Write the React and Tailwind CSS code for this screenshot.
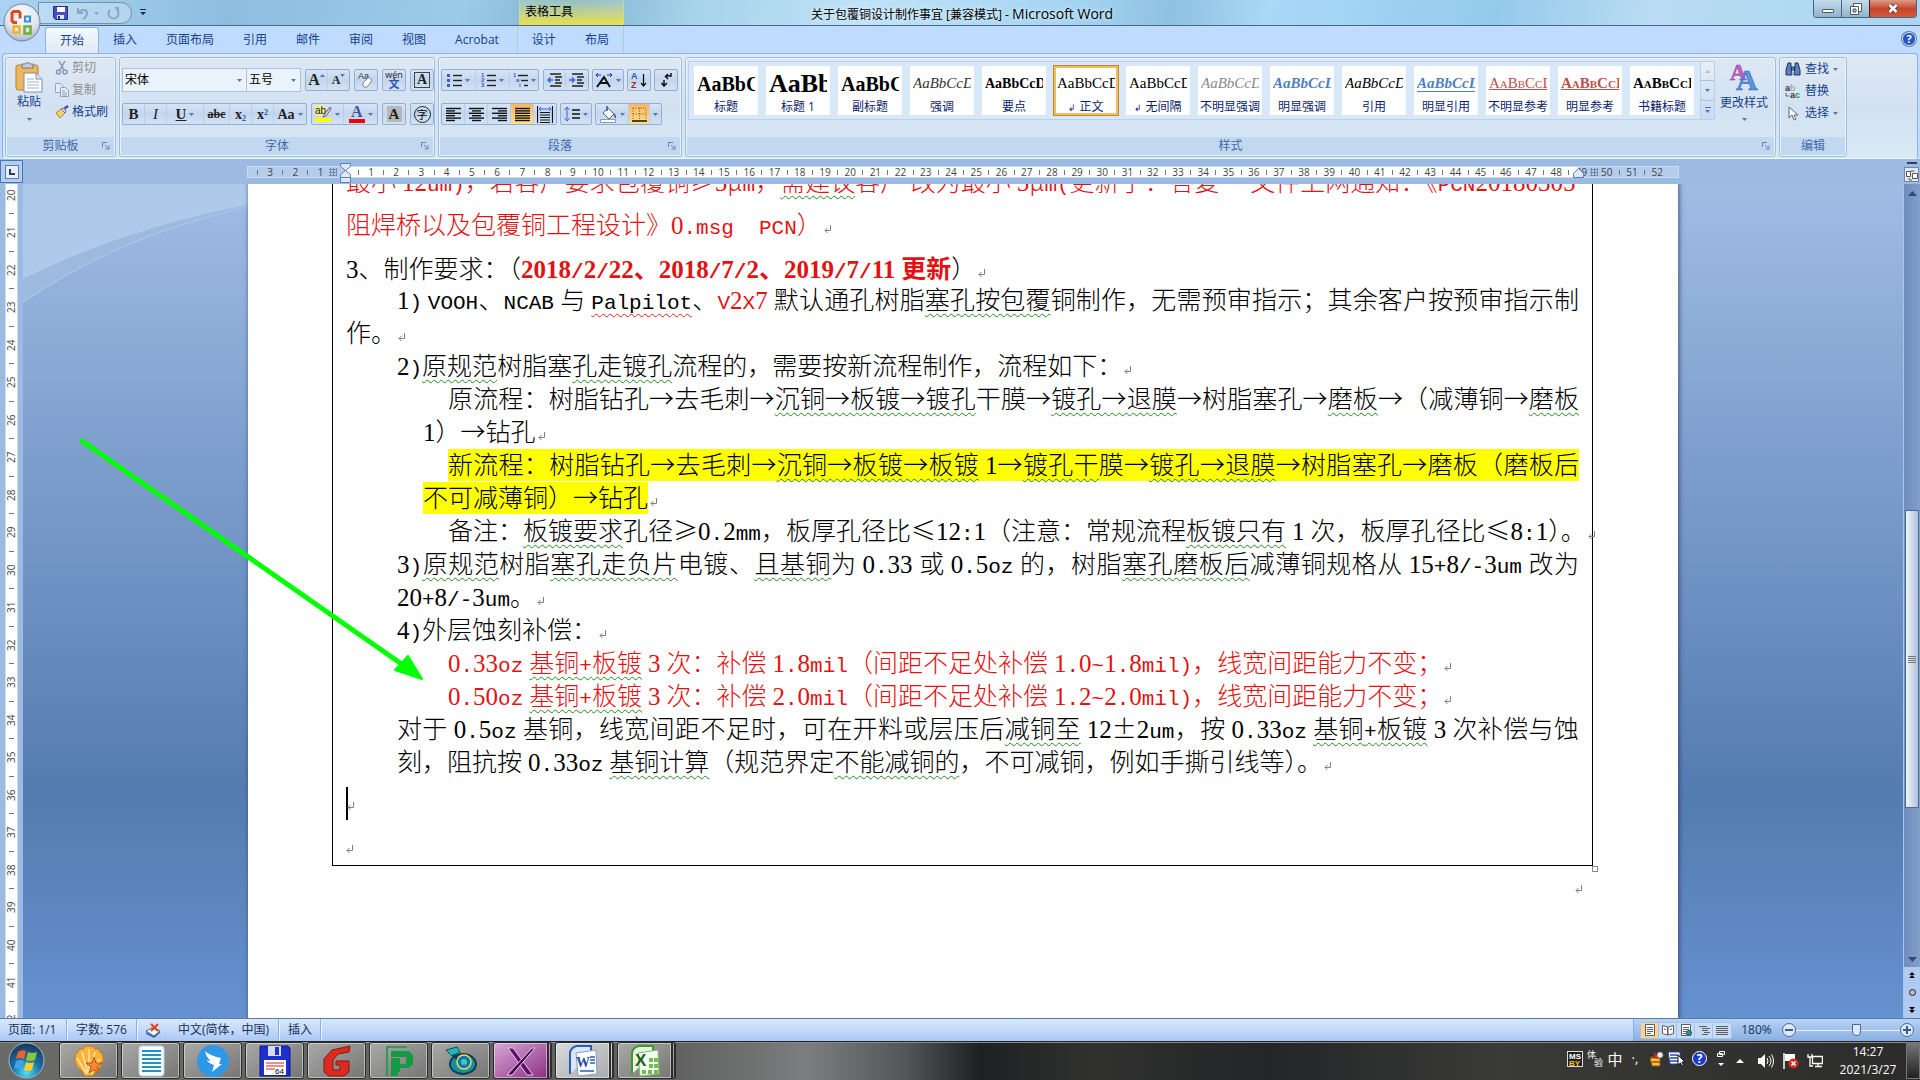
import { useState } from 'react'

const tabs = ['开始', '插入', '页面布局', '引用', '邮件', '审阅', '视图', 'Acrobat']

const styleCards = [
  { name: '标题', text: 'AaBbCcDd', cls: 'text-[20px] font-bold' },
  { name: '标题 1', text: 'AaBbCcDd', cls: 'text-[26px] font-bold' },
  { name: '副标题', text: 'AaBbCcDd', cls: 'text-[20px] font-bold' },
  { name: '强调', text: 'AaBbCcDd', cls: 'text-[15px] italic text-[#333]' },
  { name: '要点', text: 'AaBbCcDd', cls: 'text-[14px] font-bold' },
  { name: '正文', text: 'AaBbCcDd', cls: 'text-[15px]', mark: true, active: true },
  { name: '无间隔', text: 'AaBbCcDd', cls: 'text-[15px]', mark: true },
  { name: '不明显强调', text: 'AaBbCcDd', cls: 'text-[15px] italic text-[#8a8a8a]' },
  { name: '明显强调', text: 'AaBbCcDd', cls: 'text-[15px] italic font-bold text-[#4f81bd]' },
  { name: '引用', text: 'AaBbCcDd', cls: 'text-[15px] italic' },
  { name: '明显引用', text: 'AaBbCcDd', cls: 'text-[15px] italic font-bold text-[#4f81bd] border-b border-[#4f81bd]' },
  { name: '不明显参考', text: 'AaBbCcDd', cls: 'text-[15px] [font-variant:small-caps] underline text-[#c0504d]' },
  { name: '明显参考', text: 'AaBbCcDd', cls: 'text-[15px] [font-variant:small-caps] font-bold underline text-[#c0504d]' },
  { name: '书籍标题', text: 'AaBbCcDd', cls: 'text-[15px] [font-variant:small-caps] font-bold' },
]

// each part is [text, flags]: g = grammar wave, s = spelling wave, r = red, b = bold, y = highlight
const lines = [
  { box: 'h-[43px] leading-[43px] pr-[11px]', full: true, parts: [['最小12um)，若客户要求包覆铜≥5μm，', 'r'], ['需建议', 'rg'], ['客户 改为最小5μm(更新于：答复 \u3000文件上网通知：《PCN20180305', 'r']] },
  { box: 'h-[43px] leading-[43px]', parts: [['阻焊桥以及包覆铜工程设计》0.msg\u3000PCN）', 'r']] },
  { box: 'h-[37px] leading-[44px]', parts: [['3、制作要求：（'], ['2018/2/22、2018/7/2、2019/7/11更新', 'rb'], ['）']] },
  { box: 'h-[33px] pl-[51px]', full: true, parts: [['1) VOOH、NCAB与'], ['Palpilot', 's'], ['、'], ['V2X7', 'r'], ['默认通孔树脂'], ['塞孔按包覆', 'g'], ['铜制作，无需预审指示；其余客户按预审指示制']] },
  { box: 'h-[33px]', parts: [['作。']] },
  { box: 'h-[33px] pl-[51px]', parts: [['2)'], ['原规范', 'g'], ['树脂塞'], ['孔走镀孔', 'g'], ['流程的，需要按新流程制作，流程如下：']] },
  { box: 'h-[33px] pl-[102px]', full: true, parts: [['原流程：树脂钻孔→去毛刺→'], ['沉铜→板镀→镀孔', 'g'], ['干膜→'], ['镀孔→退膜', 'g'], ['→树脂塞孔→'], ['磨板', 'g'], ['→（减薄铜→'], ['磨板', 'g']] },
  { box: 'h-[33px] pl-[77px]', parts: [['1）→钻孔']] },
  { box: 'h-[33px] pl-[102px]', full: true, parts: [['新流程：树脂钻孔→去毛刺→', 'y'], ['沉铜→板镀→板镀', 'yg'], ['1→', 'y'], ['镀孔干', 'yg'], ['膜→', 'y'], ['镀孔→退膜', 'yg'], ['→树脂塞孔→磨板（磨板后', 'y']] },
  { box: 'h-[33px] pl-[77px]', parts: [['不可减薄铜）→钻孔', 'y']] },
  { box: 'h-[33px] pl-[102px]', parts: [['备注：'], ['板镀要求', 'g'], ['孔径≥0.2mm，板厚孔径比≤12:1（注意：常规流程'], ['板镀只有', 'g'], ['1次，板厚孔径比≤8:1）。']] },
  { box: 'h-[33px] pl-[51px]', full: true, parts: [['3)'], ['原规范', 'g'], ['树脂'], ['塞孔走负片', 'g'], ['电镀、'], ['且基铜', 'g'], ['为0.33或0.5oz的，树脂'], ['塞孔磨板后', 'g'], ['减薄铜规格从15+8/-3um改为']] },
  { box: 'h-[33px] pl-[51px]', parts: [['20+8/-3um。']] },
  { box: 'h-[33px] pl-[51px]', parts: [['4)外层蚀刻补偿：']] },
  { box: 'h-[33px] pl-[102px]', parts: [['0.33oz', 'r'], ['基铜+板镀', 'rg'], ['3次：补偿1.8mil（间距不足处补偿1.0~1.8mil)，线宽间距能力不变；', 'r']] },
  { box: 'h-[33px] pl-[102px]', parts: [['0.50oz', 'r'], ['基铜+板镀', 'rg'], ['3次：补偿2.0mil（间距不足处补偿1.2~2.0mil)，线宽间距能力不变；', 'r']] },
  { box: 'h-[33px] pl-[51px]', full: true, parts: [['对于0.5oz基铜，线宽间距不足时，可在开料或层压后'], ['减铜至', 'g'], ['12±2um，按0.33oz'], ['基铜+板镀', 'g'], ['3次补偿与蚀']] },
  { box: 'h-[33px] pl-[51px]', parts: [['刻，阻抗按0.33oz'], ['基铜计算', 'g'], ['（规范界定'], ['不能减铜的', 'g'], ['，不可减铜，例如手撕引线等）。']] },
]

const flagClass = {
  g: 'underline decoration-wavy decoration-1 decoration-[#1f8a1f] underline-offset-[4px]',
  s: 'underline decoration-wavy decoration-1 decoration-[#e02020] underline-offset-[4px]',
  r: 'text-[#e31212]',
  b: 'font-bold',
  y: 'bg-[linear-gradient(transparent_4px,#ffff00_4px)]',
}

const isHan = (c) => !!c && /[\u4e00-\u9fff]/.test(c)

// half-width characters all take 12-13px, so digits can be serif while letters stay monospaced
function Half({ run, before, after }){
  return (
    <span className={`font-["Liberation_Mono","Noto_Sans_CJK_SC",monospace] text-[21px] ${before ? 'pl-[6px]' : ''} ${after ? 'pr-[6px]' : ''}`}>
      {run.split(/(\d+)/).map((s, i) => i % 2 ? <span key={i} className="font-['Liberation_Serif',serif] text-[25px]">{s}</span> : s)}
    </span>
  )
}

function DocLine({ line }){
  const whole = line.parts.map((p) => p[0]).join('')
  let pos = 0
  return (
    <p className={`whitespace-nowrap leading-[33px] ${line.box} ${line.full ? '[text-align-last:justify]' : ''}`}>
      {line.parts.map(([text, flags = ''], i) => (
        <span key={i} className={[...flags].map((f) => flagClass[f]).join(' ')}>
          {text.split(/([!-~]+)/).map((run, j) => {
            const start = pos
            pos += run.length
            if (j % 2 === 0) return run
            const before = isHan(whole[start - 1]) && /[0-9A-Za-z]/.test(run[0])
            const after = isHan(whole[pos]) && /[0-9A-Za-z]/.test(run[run.length - 1])
            return <Half key={j} run={run} before={before} after={after} />
          })}
        </span>
      ))}
      {!line.full && <Mark className="ml-[2px]" />}
    </p>
  )
}

function Mark({ className = '' }){
  return (
    <svg className={`inline-block align-baseline ${className}`} width="8" height="9" viewBox="0 0 8 9" fill="none" stroke="#808080">
      <path d="M6.5 0v5.5H1M3.5 3L1 5.5 3.5 8" />
    </svg>
  )
}

function Caret({ className = '' }){
  return <svg className={`shrink-0 ${className}`} width="5" height="3" viewBox="0 0 5 3" fill="#5578ad"><path d="M0 0h5L2.5 3z" /></svg>
}

function Group({ title, launcher, className = '', children }){
  return (
    <section className={`flex flex-col rounded-[3px] border border-[#9dbfe0] shadow-[inset_0_0_0_1px_#e9f2fb] ${className}`}>
      <div className="flex-1 px-[2px]">{children}</div>
      <div className="mx-px mb-px flex h-[18px] items-center bg-[#c1d8f0] text-[12px] text-[#3e6aaa]">
        <span className="flex-1 text-center">{title}</span>
        {launcher && (
          <button aria-label={`${title}选项`} className="mr-[4px] -ml-[12px]">
            <svg width="8" height="8" viewBox="0 0 8 8" fill="none" stroke="#6684ad"><path d="M.5 5V.5H5M3 3l3 3M7 3.5V7H3.5" /></svg>
          </button>
        )}
      </div>
    </section>
  )
}

function Set({ className = '', children }){
  return (
    <div className={`flex h-[22px] divide-x divide-[#b9cfe9] rounded-[2px] border border-[#93afd6] bg-linear-to-b from-[#d7e4f5] via-[#c3d6ee] to-[#d3e2f4] ${className}`}>{children}</div>
  )
}

function Tool({ label, drop, on, className = 'w-[22px]', children }){
  return (
    <button aria-label={label} title={label} className={`flex items-center justify-center gap-[3px] ${on ? 'bg-linear-to-b from-[#fbb560] to-[#fddf8d]' : ''} ${className}`}>
      {children}
      {drop && <Caret />}
    </button>
  )
}

function Bars({ widths, align = 'start' }){
  return (
    <svg width="15" height="15" viewBox="0 0 15 15" stroke="#111" strokeWidth="1.4">
      {widths.map((w, i) => {
        const x = align === 'start' ? 0 : align === 'end' ? 15 - w : (15 - w) / 2
        return <path key={i} d={`M${x} ${1.5 + i * 2.4}h${w}`} />
      })}
    </svg>
  )
}

function ListIcon({ kind }){
  return (
    <svg width="15" height="15" viewBox="0 0 15 15">
      {[2, 7, 12].map((y, i) => (
        <g key={y}>
          {kind === 'dot'
            ? <rect x="0" y={y - 1} width="3" height="3" fill="#3b62b5" />
            : <text x={kind === 'multi' ? i * 3 : 0} y={y + 2} fontSize="6" fill="#3b62b5" fontWeight="bold" fontFamily="Liberation Sans">{kind === 'num' ? i + 1 : '1ai'[i]}</text>}
          <path d={`M${kind === 'multi' ? 5 + i * 3 : 6} ${y + .5}H15`} stroke="#222" strokeWidth="1.4" />
        </g>
      ))}
    </svg>
  )
}

function Indent({ flip }){
  return (
    <svg width="16" height="14" viewBox="0 0 16 14" fill="none" stroke="#222" strokeWidth="1.4">
      <path d="M3 1h11M8 4h7M8 7h5M8 10h7M3 13h11" />
      <path d={flip ? 'M0 7h5M3 4.5L5.500 7 3 9.500' : 'M6 7H1M3.500 4.500L1 7l2.500 2.500'} stroke="#3b62d0" />
    </svg>
  )
}

function TitleBar(){
  return (
    <header className="flex h-[25px] items-start bg-[linear-gradient(100deg,#a9d3f0_0%,#8dbedf_12%,#9bcbe8_24%,#7fb3cf_30%,#a7d2ec_36%,#bfe3f7_45%,#a3d4f2_56%,#8fc2e0_61%,#a8d9f7_66%,#96caeb_78%,#b9dcf3_86%,#a9d6f1_100%)]">
      <div className="mt-[2px] ml-[38px] flex h-[22px] items-center gap-[8px] rounded-r-full border border-[#6f93ad] bg-white/25 pr-[11px] pl-[14px]">
        <button aria-label="保存">
          <svg width="15" height="14" viewBox="0 0 15 14"><path d="M.5.5h14v13h-12l-2-2z" fill="#4a4fc0" stroke="#23308f" /><path d="M4 1h8v5H4z" fill="#fff" /><path d="M4 9h7v4H4z" fill="#dfe6f5" /><path d="M5 10h2v3H5z" fill="#23308f" /></svg>
        </button>
        <button aria-label="撤消" className="flex items-center gap-[5px]">
          <svg width="13" height="13" viewBox="0 0 13 13" fill="none" stroke="#8ba6c4" strokeWidth="2"><path d="M2 1v5h5M2.500 5.500C5 2 11 2 11 6c0 3-2 5-4 6" /></svg>
          <Caret className="opacity-50" />
        </button>
        <button aria-label="恢复">
          <svg width="13" height="13" viewBox="0 0 13 13" fill="none" stroke="#8ba6c4" strokeWidth="2"><path d="M3 3a5 5 0 1 0 7 0M8 1h3v4" /></svg>
        </button>
      </div>
      <button aria-label="自定义快速访问工具栏" className="mt-[9px] ml-[8px]">
        <svg width="6" height="6" viewBox="0 0 6 6" fill="#1d2d44"><path d="M0 0h6v1H0zM0 3h6L3 6z" /></svg>
      </button>
      <div className="ml-[373px] h-[25px] w-[105px] border-x border-[#d9dc8a]/60 bg-linear-to-b from-[#d8e8b0]/20 to-[#e9e04c] pl-[5px] text-[12px] leading-[23px] text-black">表格工具</div>
      <h1 className="ml-[187px] text-[12px] leading-[27px] text-black [text-shadow:0_0_5px_#fff]">关于包覆铜设计制作事宜 [兼容模式] - <span className="text-[14px]">Microsoft Word</span></h1>
      <div className="mr-[3px] ml-auto flex h-[18px] overflow-hidden rounded-b-[4px] border border-t-0 border-[#4d6478]">
        <button aria-label="最小化" className="flex w-[28px] items-center justify-center border-r border-[#4d6478] bg-linear-to-b from-[#c5dcec] to-[#90b3cd]"><i className="mt-[4px] h-[4px] w-[12px] rounded-[1px] border border-[#4b5a68] bg-white" /></button>
        <button aria-label="还原" className="flex w-[27px] items-center justify-center bg-linear-to-b from-[#c5dcec] to-[#90b3cd]">
          <svg width="12" height="12" viewBox="0 0 12 12" fill="#fff" stroke="#4b5a68"><path d="M3.500.5h8v8h-8z" /><path d="M.5 3.500h8v8h-8z" /><path d="M3 6h3v3H3z" fill="#a6c3d8" /></svg>
        </button>
        <button aria-label="关闭" className="flex w-[47px] items-center justify-center border-l border-[#4d2018] bg-linear-to-b from-[#dc9a88] via-[#c8442c] to-[#cf5a3c]">
          <svg width="12" height="11" viewBox="0 0 12 11"><path d="M2.500 2l7 7M9.500 2l-7 7" stroke="#4b3a38" strokeWidth="4.500" /><path d="M2.500 2l7 7M9.500 2l-7 7" stroke="#fff" strokeWidth="2.600" /></svg>
        </button>
      </div>
    </header>
  )
}

function OfficeOrb(){
  return (
    <button aria-label="Office 按钮" className="absolute top-[3px] left-[3px]">
      <svg width="38" height="39" viewBox="0 0 38 39">
        <defs>
          <radialGradient id="orb" cx=".5" cy=".3" r=".75"><stop offset="0" stopColor="#fff" /><stop offset=".6" stopColor="#dfe5ee" /><stop offset="1" stopColor="#9dabc2" /></radialGradient>
        </defs>
        <ellipse cx="19" cy="19.500" rx="18" ry="18.500" fill="url(#orb)" stroke="#72859f" />
        <g fill="none" strokeWidth="3">
          <path d="M17 8.500h-6.500l-1.500 1.500v8l1.500 1.500H14M17 8.500v7" stroke="#e0481c" />
          <path d="M22 13.500h5v5h-5z" stroke="#3e8fd6" strokeWidth="2.200" />
          <path d="M10.500 23.500h6v6h-6z" stroke="#f2b21a" strokeWidth="2.400" />
          <path d="M21.500 23.500h6v7h-6z" stroke="#6fae3a" strokeWidth="2.600" />
        </g>
      </svg>
    </button>
  )
}

function TabRow(){
  return (
    <nav className="flex h-[28px] items-end gap-px border-t border-[#4c6788] bg-[#bfdbff] pl-[45px] text-[12px] text-[#15428b]">
      {tabs.map((t, i) => (
        <button key={t} className={`h-[26px] px-[14px] ${i === 0 ? '-mr-px rounded-t-[3px] border border-b-0 border-[#8db2e3] bg-linear-to-b from-[#f4f9ff] to-[#dfe9f5] px-[13px]' : ''}`}>{t}</button>
      ))}
      <div className="ml-[3px] flex h-full items-end gap-px border-x border-[#a9bfa8]/60">
        <button className="h-[26px] px-[14px]">设计</button>
        <button className="h-[26px] px-[14px]">布局</button>
      </div>
      <button aria-label="帮助" className="mr-[4px] mb-[7px] ml-auto flex h-[14px] w-[14px] items-center justify-center rounded-full border border-[#d5e3f5] bg-[#2456c4] text-[11px] font-bold text-white ring-1 ring-[#5b7fb5]">?</button>
    </nav>
  )
}

function Clipboard(){
  return (
    <Group title="剪贴板" launcher className="w-[111px]">
      <div className="flex gap-[5px] text-[12px] whitespace-nowrap text-[#15428b]">
        <button className="flex w-[42px] flex-col items-center pt-[3px]">
          <svg width="28" height="32" viewBox="0 0 28 32">
            <rect x="1" y="4" width="22" height="25" rx="2" fill="#efb75b" stroke="#b5802e" />
            <path d="M7 3h3a3 3 0 0 1 5 0h3v4H7z" fill="#c9cdd3" stroke="#6f7780" />
            <path d="M9 12h12l6 6v13H9z" fill="#fff" stroke="#7b8fae" /><path d="M21 12v6h6" fill="#dbe5f3" stroke="#7b8fae" />
            <path d="M12 18h7M12 21h12M12 24h12M12 27h12" stroke="#9fb3d1" />
          </svg>
          <span className="leading-[18px]">粘贴</span>
          <Caret className="mt-[7px]" />
        </button>
        <div className="flex flex-col gap-[4px] pt-[1px] leading-[18px]">
          <button className="flex items-center gap-[3px] text-[#8d8d8d]">
            <svg width="14" height="14" viewBox="0 0 14 14" fill="none" stroke="#8396b4" strokeWidth="1.500"><path d="M4 0l5 9M10 0L5 9" /><circle cx="3.500" cy="11" r="2" /><circle cx="10" cy="11" r="2" /></svg>剪切
          </button>
          <button className="flex items-center gap-[3px] text-[#8d8d8d]">
            <svg width="14" height="14" viewBox="0 0 14 14" fill="#e6ecf5" stroke="#93a4be"><path d="M.5.5h5l3 3v6h-8z" /><path d="M5.500 4.500h5l3 3v6h-8zM7 8h3M7 10h5M7 12h5" /></svg>复制
          </button>
          <button className="flex items-center gap-[3px]">
            <svg width="14" height="14" viewBox="0 0 14 14"><path d="M1 8l5-4 4 4-5 5z" fill="#f3d36b" stroke="#a88a35" /><path d="M6 4l2-1 3 3-1 2z" fill="#dfe4ef" stroke="#6470a0" /><path d="M9.500 3.500L13 1" stroke="#4c4a9c" strokeWidth="2.500" /></svg>格式刷
          </button>
        </div>
      </div>
    </Group>
  )
}

function FontGroup(){
  const serif = 'font-["Liberation_Serif",serif] font-bold text-[#222]'
  return (
    <Group title="字体" launcher className="w-[316px]">
      <div className="flex items-center pt-[10px] text-[12px]">
        <label className="relative">
          <span className="sr-only">字体</span>
          <select className="h-[24px] w-[125px] appearance-none border border-[#abc1de] bg-[#eaf2fb] pl-[2px] text-black"><option>宋体</option></select>
          <Caret className="absolute top-[11px] right-[5px]" />
        </label>
        <label className="relative">
          <span className="sr-only">字号</span>
          <select className="h-[24px] w-[54px] appearance-none border border-l-0 border-[#abc1de] bg-[#eaf2fb] pl-[2px] text-black"><option>五号</option></select>
          <Caret className="absolute top-[11px] right-[5px]" />
        </label>
        <Set className="ml-[4px]">
          <Tool label="增大字体"><span className={`text-[16px] ${serif}`}>A</span><Caret className="mb-[9px] -ml-[3px] rotate-180" /></Tool>
          <Tool label="缩小字体" className="w-[21px]"><span className={`text-[12px] ${serif}`}>A</span><Caret className="mb-[9px] -ml-[3px]" /></Tool>
        </Set>
        <Set className="ml-[4px]"><Tool label="清除格式"><svg width="18" height="18" viewBox="0 0 18 18"><text x="1" y="8" fontSize="9" fontFamily="Liberation Sans" fill="#333">Aa</text><path d="M6 12l5-5q2-1 3 1t0 3l-4 5q-3 1-4-1z" fill="#fff" stroke="#7a8194" /></svg></Tool></Set>
        <Set className="ml-[4px]">
          <Tool label="拼音指南"><span className="flex flex-col items-center text-[#222]"><span className="text-[9px] leading-[7px]">wén</span><span className="text-[11px] leading-[11px] font-bold text-[#2b55b5]">文</span></span></Tool>
        </Set>
        <Set className="ml-[4px]"><Tool label="字符边框"><span className={`h-[16px] w-[16px] border border-[#444] text-[14px] leading-[14px] ${serif}`}>A</span></Tool></Set>
      </div>
      <div className="flex items-center pt-[11px]">
        <Set>
          <Tool label="加粗"><span className={`text-[15px] ${serif}`}>B</span></Tool>
          <Tool label="倾斜"><span className="font-['Liberation_Serif',serif] text-[15px] text-[#222] italic">I</span></Tool>
          <Tool label="下划线" drop className="w-[37px]"><span className={`text-[15px] underline ${serif}`}>U</span></Tool>
          <Tool label="删除线" className="w-[26px]"><span className={`text-[12px] line-through ${serif}`}>abc</span></Tool>
          <Tool label="下标"><span className={`text-[14px] ${serif}`}>x<sub className="text-[8px] text-[#2b55b5]">2</sub></span></Tool>
          <Tool label="上标"><span className={`text-[14px] ${serif}`}>x<sup className="text-[8px] text-[#2b55b5]">2</sup></span></Tool>
          <Tool label="更改大小写" drop className="w-[32px]"><span className={`text-[14px] ${serif}`}>Aa</span></Tool>
        </Set>
        <Set className="ml-[4px]">
          <Tool label="突出显示" drop className="w-[32px]"><svg width="17" height="18" viewBox="0 0 17 18"><path d="M0 0h10v11H0z" fill="#f3f08a" /><text x="0" y="9" fontSize="10" fontFamily="Liberation Sans" fill="#222">ab</text><path d="M15 2l-6 8-1 2 3-1 5-7z" fill="#d9dee8" stroke="#666" /><path d="M0 13h16v4H0z" fill="#ffff00" /></svg></Tool>
          <Tool label="字体颜色" drop className="w-[33px]"><svg width="16" height="18" viewBox="0 0 16 18"><text x="2" y="12" fontSize="16" fontWeight="bold" fontFamily="Liberation Serif" fill="#3c5a99">A</text><path d="M0 14h16v4H0z" fill="#f00000" /></svg></Tool>
        </Set>
        <Set className="ml-[4px]"><Tool label="字符底纹"><span className={`w-[15px] bg-[#b8b8b8] text-center text-[15px] leading-[16px] ${serif}`}>A</span></Tool></Set>
        <Set className="ml-[4px]"><Tool label="带圈字符"><span className="h-[17px] w-[17px] rounded-full border border-[#222] text-[11px] leading-[15px] text-black">字</span></Tool></Set>
      </div>
    </Group>
  )
}

function ParagraphGroup(){
  return (
    <Group title="段落" launcher className="w-[244px]">
      <div className="flex items-center pt-[11px]">
        <Set>
          <Tool label="项目符号" drop className="w-[34px]"><ListIcon kind="dot" /></Tool>
          <Tool label="编号" drop className="w-[34px]"><ListIcon kind="num" /></Tool>
          <Tool label="多级列表" drop className="w-[28px]"><ListIcon kind="multi" /></Tool>
        </Set>
        <Set className="ml-[4px]">
          <Tool label="减少缩进量"><Indent /></Tool>
          <Tool label="增加缩进量"><Indent flip /></Tool>
        </Set>
        <Set className="ml-[3px]">
          <Tool label="中文版式" drop className="w-[30px]"><svg width="18" height="15" viewBox="0 0 18 15" fill="none"><path d="M2 14L9 4l6 10M5 10h8" stroke="#111" strokeWidth="2" /><path d="M1 2h5M3 0L1 2l2 2M12 2h5M15 0l2 2-2 2" stroke="#1b2fc0" /></svg></Tool>
        </Set>
        <Set className="ml-[3px]">
          <Tool label="排序"><svg width="16" height="18" viewBox="0 0 16 18"><text x="0" y="8" fontSize="9" fontWeight="bold" fontFamily="Liberation Sans" fill="#2b55b5">A</text><text x="0" y="17" fontSize="9" fontWeight="bold" fontFamily="Liberation Sans" fill="#a03030">Z</text><path d="M12.500 3v12M10 12l2.500 3 2.500-3" stroke="#111" fill="none" strokeWidth="1.300" /></svg></Tool>
        </Set>
        <Set className="ml-[3px]">
          <Tool label="显示编辑标记"><svg width="13" height="14" viewBox="0 0 13 14" fill="none" stroke="#111" strokeWidth="1.500"><path d="M11 0v3H6M8 1L5.500 3.500 8 6M4 7v5M1.500 10L4 13l3-3" /></svg></Tool>
        </Set>
      </div>
      <div className="flex items-center pt-[12px]">
        <Set>
          <Tool label="左对齐" className="w-[23px]"><Bars widths={[15, 9, 15, 9, 15, 9]} /></Tool>
          <Tool label="居中" className="w-[23px]"><Bars widths={[15, 9, 15, 9, 15, 9]} align="mid" /></Tool>
          <Tool label="右对齐" className="w-[23px]"><Bars widths={[15, 9, 15, 9, 15, 9]} align="end" /></Tool>
          <Tool label="两端对齐" on className="w-[23px]"><Bars widths={[15, 15, 15, 15, 15, 15]} /></Tool>
          <Tool label="分散对齐" className="w-[22px]"><svg width="16" height="17" viewBox="0 0 16 17" fill="none"><path d="M.5 0v17M15.500 0v17M3 6.500h10M3 9h10M3 11.500h10M3 14h10M3 16.500h10" stroke="#111" strokeWidth="1.200" /><path d="M2 3h12M4 1L2 3l2 2M12 1l2 2-2 2" stroke="#3b62d0" /></svg></Tool>
        </Set>
        <Set className="ml-[3px]">
          <Tool label="行距" drop className="w-[30px]"><svg width="16" height="16" viewBox="0 0 16 16" fill="none"><path d="M3 1v14M.5 4L3 1l2.500 3M.5 12L3 15l2.500-3" stroke="#3b62d0" /><path d="M8 4h8M8 8h8M8 12h8" stroke="#111" strokeWidth="1.500" /></svg></Tool>
        </Set>
        <Set className="ml-[3px]">
          <Tool label="底纹" drop className="w-[33px]"><svg width="17" height="17" viewBox="0 0 17 17"><path d="M3 7l5-5 6 6-5 5z" fill="#f4f6fa" stroke="#56617a" /><path d="M7 5V0M14 8q2 2 1 4" fill="none" stroke="#3456a5" strokeWidth="1.500" /><path d="M.5 13.500h15v3H.5z" fill="#fff" stroke="#8c99ad" /></svg></Tool>
          <Tool label="边框" on className="w-[21px]"><svg width="15" height="15" viewBox="0 0 15 15" fill="none"><path d="M1 1h13v12M1 1v12M7.500 1v12M1 7h13" stroke="#7a5b1f" strokeDasharray="1 1.500" /><path d="M0 14h15" stroke="#111" strokeWidth="1.500" /></svg></Tool>
          <Tool label="边框选项" className="w-[11px]"><Caret /></Tool>
        </Set>
      </div>
    </Group>
  )
}

function StyleGroup(){
  const [picked, setPicked] = useState('正文')
  return (
    <Group title="样式" launcher className="min-w-0 flex-1">
      <div className="flex pt-[3px]">
        <div className="flex h-[59px] min-w-0 flex-1 justify-between overflow-hidden border border-[#b9d0ed] bg-[#d9e8f8] py-[3px] pr-[5px] pl-[4px]">
          {styleCards.map((s) => (
            <button key={s.name} onClick={() => setPicked(s.name)} className={`flex w-[66px] shrink-0 flex-col items-center overflow-hidden border bg-white ${picked === s.name ? 'border-[#b98a3c] shadow-[inset_0_0_0_2px_#f5bf54]' : 'border-[#d9e8f8]'}`}>
              <span className="flex h-[33px] w-[58px] items-center overflow-hidden pt-[2px] whitespace-nowrap font-['Liberation_Serif',serif] text-black">
                <span className={`leading-none ${s.cls}`}>{s.text}</span>
              </span>
              <span className="text-[12px] leading-[15px] whitespace-nowrap text-[#0a1c6b]">{s.mark && <span className="mr-[3px] text-[9px]">↲</span>}{s.name}</span>
            </button>
          ))}
        </div>
        <div className="flex h-[59px] w-[14px] flex-col divide-y divide-[#a9c3e6] border border-l-0 border-[#b9d0ed] bg-linear-to-b from-[#e8eef5] to-[#c6dbf5]">
          <button aria-label="上一行" className="flex flex-1 items-center justify-center"><Caret className="rotate-180 opacity-40" /></button>
          <button aria-label="下一行" className="flex flex-1 items-center justify-center"><Caret /></button>
          <button aria-label="其他" className="flex flex-1 flex-col items-center justify-center gap-[2px]"><i className="h-px w-[6px] bg-[#5578ad]" /><Caret /></button>
        </div>
        <button className="flex w-[58px] flex-col items-center pt-[1px] text-[12px] text-[#15428b]">
          <svg width="30" height="30" viewBox="0 0 30 30" fontFamily="Liberation Serif" fontWeight="bold"><text x="1" y="18" fontSize="23" fill="#c25fc0" stroke="#8b3a98" strokeWidth=".5">A</text><text x="7" y="28" fontSize="30" fill="#5b93dd" stroke="#2c5faa" strokeWidth=".5">A</text></svg>
          <span className="leading-[22px]">更改样式</span>
          <Caret className="mt-[4px]" />
        </button>
      </div>
    </Group>
  )
}

function EditGroup(){
  return (
    <Group title="编辑" className="w-[68px]">
      <div className="flex flex-col gap-[4px] pt-[2px] pl-[3px] text-[12px] leading-[18px] whitespace-nowrap text-[#15428b]">
        <button className="flex items-center gap-[4px]"><svg width="16" height="14" viewBox="0 0 16 14" fill="#5e7fb8" stroke="#1d3566"><path d="M3 1h3v3l1 9H1V8zM10 1h3l2 7v5H9l1-9z" /><path d="M6.500 5h3v3h-3z" /></svg>查找<Caret /></button>
        <button className="flex items-center gap-[4px]"><svg width="16" height="15" viewBox="0 0 16 15" fontFamily="Liberation Sans" fontSize="9" fontWeight="bold"><text x="0" y="7" fill="#333">a</text><text x="5" y="7" fill="#aaa">b</text><text x="5" y="14" fill="#333">a</text><text x="10" y="14" fill="#2a9a3a">c</text><path d="M1 9v3h3" fill="none" stroke="#3b62b5" /></svg>替换</button>
        <button className="flex items-center gap-[4px]"><svg width="16" height="15" viewBox="0 0 16 15"><path d="M4 1v11l3-3 2 5 2-1-2-4h4z" fill="#fff" stroke="#5b6575" /></svg>选择<Caret /></button>
      </div>
    </Group>
  )
}

function RulerH(){
  const cells = Array.from({ length: 56 }, (_, i) => i - 3)
  return (
    <div className="flex h-[25px] shrink-0 bg-[#9cbae2] pt-px">
      <button aria-label="制表符" className="flex h-[23px] w-[23px] shrink-0 items-center justify-center border border-[#4a74b8] bg-[#b3cdf1]">
        <span className="flex h-[14px] w-[14px] items-center justify-center border border-[#5f7ca8] bg-[#e6eef9]"><i className="h-[6px] w-[6px] border-b-2 border-l-2 border-[#2c3f5f]" /></span>
      </button>
      <div className="flex flex-1 justify-center">
        <div className="relative mt-[6px] flex h-[12px] w-[1432px] border border-[#c9dcf4] bg-[linear-gradient(to_right,#b5cdec_97px,#fff_97px,#fff_1330px,#b5cdec_1330px)] px-[9px] text-[10px] text-[#444]">
          {cells.map((n) => (
            <div key={n} className="flex flex-1 items-center leading-[10px]">
              <i className="h-[5px] w-px bg-[#777]" />
              <span className="flex-1 text-center">{n === 0 ? '' : Math.abs(n)}</span>
            </div>
          ))}
          <svg className="absolute -top-[4px] left-[92px]" width="11" height="20" viewBox="0 0 11 20" fill="#dde9f8" stroke="#5f7fb0"><path d="M.5.5h10v3l-5 4-5-4zM5.500 7.500l5 4v3H.5v-3zM.5 14.500h10v5H.5z" /></svg>
          <svg className="absolute top-[1px] left-[81px]" width="8" height="8" viewBox="0 0 8 8" stroke="#6a7f9f"><path d="M1.500 0v8M4.500 0v8M7.500 0v8M0 1.500h8M0 4.500h8M0 7.500h8" strokeWidth=".8" /></svg>
          <svg className="absolute top-[1px] left-[1342px]" width="8" height="8" viewBox="0 0 8 8" stroke="#6a7f9f"><path d="M1.500 0v8M4.500 0v8M7.500 0v8M0 1.500h8M0 4.500h8M0 7.500h8" strokeWidth=".8" /></svg>
          <svg className="absolute top-[1px] left-[1325px]" width="11" height="10" viewBox="0 0 11 10" fill="#dde9f8" stroke="#5f7fb0"><path d="M5.500.5l5 5v4H.5v-4z" /></svg>
        </div>
      </div>
      <div className="flex w-[17px] flex-col items-center gap-[3px] pt-[2px]">
        <i className="h-[2px] w-[10px] bg-[#2c3f6f]" />
        <button aria-label="标尺" className="flex h-[15px] w-[15px] items-center justify-center border border-[#7289ad] bg-[#e3e8f0]"><svg width="12" height="12" viewBox="0 0 12 12" fill="#fff" stroke="#555"><path d="M.5 2.500h4v5h-4zM6.500 4.500h5v5h-5zM4.500 2h4M3 9v2h3" /></svg></button>
      </div>
    </div>
  )
}

function RulerV(){
  const rows = Array.from({ length: 23 }, (_, i) => i + 20)
  return (
    <div className="w-[23px] shrink-0 overflow-hidden bg-[#9cbae2] pl-[5px]">
      <div className="-mt-[7px] w-[13px] border-x border-[#c9dcf4] bg-white text-[10px] text-[#444]">
        {rows.map((n, i) => (
          <div key={n} className={`flex w-[11px] flex-col items-center ${i % 2 ? 'h-[38px]' : 'h-[37px]'}`}>
            <span className="flex flex-1 rotate-180 items-center justify-center leading-[11px] [writing-mode:vertical-rl]">{n}</span>
            <i className="h-px w-[5px] bg-[#777]" />
          </div>
        ))}
      </div>
    </div>
  )
}

function Scroll(){
  return (
    <div className="flex w-[17px] shrink-0 flex-col border-l border-[#a9c6f3] bg-[#b0caf2]">
      <div className="flex min-h-0 flex-1 flex-col items-center bg-linear-to-r from-[#6e8dbd] to-[#839fcb]">
        <button aria-label="向上滚动" className="flex h-[18px] items-center"><svg width="9" height="5" viewBox="0 0 9 5" fill="#2e4a80"><path d="M0 5l4.500-5L9 5z" /></svg></button>
        <div className="flex-[309]" />
        <div className="flex w-[14px] flex-[297] flex-col items-center justify-center gap-px border border-[#50699b] bg-linear-to-r from-[#f1f5fb] to-[#b0c2d8]">
          <i className="h-px w-[8px] bg-[#777]" /><i className="h-px w-[8px] bg-[#777]" /><i className="h-px w-[8px] bg-[#777]" /><i className="h-px w-[8px] bg-[#777]" />
        </div>
        <div className="flex-[143]" />
        <button aria-label="向下滚动" className="flex h-[16px] items-center"><svg width="9" height="5" viewBox="0 0 9 5" fill="#2e4a80"><path d="M0 0h9L4.500 5z" /></svg></button>
      </div>
      <div className="flex h-[51px] flex-col items-center justify-around">
        <button aria-label="前一页"><svg width="6" height="6" viewBox="0 0 6 6"><path d="M0 3l3-3 3 3zM0 6l3-3 3 3z" /></svg></button>
        <button aria-label="选择浏览对象" className="h-[7px] w-[7px] rounded-full border border-[#222] bg-[#bbb]" />
        <button aria-label="下一页"><svg width="6" height="6" viewBox="0 0 6 6"><path d="M0 0h6L3 3zM0 3h6L3 6z" /></svg></button>
      </div>
    </div>
  )
}

function Canvas(){
  return (
    <main className="relative min-w-0 flex-1 overflow-hidden bg-linear-to-b from-[#9fbce5] from-0% via-[#557cb0] via-73% to-[#6691d0] to-100%">
      <svg className="absolute top-0 left-0" width="225" height="120" viewBox="0 0 225 120">
        <path d="M0 0h225v23Q100 50 0 118z" fill="#9db9dd" />
        <path d="M0 0h225v21Q100 45 0 95z" fill="#aec9ea" />
        <path d="M0 118Q100 50 225 23" fill="none" stroke="#a9c4e8" strokeWidth="1.500" />
      </svg>
      <div className="relative mx-auto flow-root h-full w-[1430px] bg-white shadow-[1px_0_4px_1px_rgba(40,60,100,.6)]">
        <article className="-mt-[25px] ml-[84px] w-[1261px] border border-t-0 border-black px-[13px] font-['Noto_Sans_CJK_SC',sans-serif] text-[25px] font-light text-black">
          {lines.map((l, i) => <DocLine key={i} line={l} />)}
          <div className="mt-[10px] flex h-[33px] items-center"><i className="h-full w-[2px] bg-black" /><Mark className="mt-[6px] -ml-px" /></div>
          <div className="flex h-[45px] items-center pt-[14px]"><Mark /></div>
        </article>
        <div className="ml-[1344px] h-[6px] w-[6px] border border-[#888]" />
        <div className="ml-[1327px] pt-[4px]"><Mark /></div>
      </div>
      <svg className="absolute top-[250px] left-[50px]" width="360" height="260" viewBox="0 0 360 260">
        <path d="M9 7L330 231" stroke="#00ff00" strokeWidth="5" strokeLinecap="round" />
        <path d="M349 245l-27-9 13-14z" fill="#00ff00" stroke="#00ff00" strokeWidth="2" strokeLinejoin="round" />
      </svg>
    </main>
  )
}

function StatusBar(){
  const [zoom, setZoom] = useState(59)
  const cell = 'flex h-full items-center border-r border-[#8db0e0] shadow-[1px_0_0_#e8f1fd]'
  return (
    <footer className="flex h-[23px] shrink-0 items-center border-t border-[#567db0] bg-linear-to-b from-[#d9e8fb] via-[#c4d9f7] to-[#a8c8f5] text-[12px] text-[#15325f]">
      <div className={`w-[67px] pl-[8px] ${cell}`}>页面: 1/1</div>
      <div className={`w-[70px] pl-[9px] ${cell}`}>字数: 576</div>
      <button aria-label="校对" className="ml-[8px]"><svg width="17" height="15" viewBox="0 0 17 15"><path d="M1 8l6-3 8 3-6 5z" fill="#fff" stroke="#3e62a8" /><path d="M1 10l8 4 6-5" fill="none" stroke="#3e62a8" strokeWidth="1.500" /><path d="M6 1l7 7M13 1L6 8" stroke="#e2401c" strokeWidth="2" /></svg></button>
      <div className={`w-[117px] pl-[16px] whitespace-nowrap ${cell}`}>中文(简体，中国)</div>
      <div className={`w-[42px] pl-[9px] ${cell}`}>插入</div>
      <div className="flex h-full flex-1 border-r border-[#8db0e0]" />
      <div className="flex h-full w-[286px] items-center bg-linear-to-b from-[#b9d3f5] to-[#88afe2] pl-[6px]">
        <div className="flex h-[17px] divide-x divide-[#a9c3e6] rounded-[2px] border border-[#a9c3e6] bg-[#c6dbf5]">
          {['页面视图', '阅读版式', 'Web 版式', '大纲视图', '普通视图'].map((v, i) => (
            <button key={v} aria-label={v} className={`flex w-[18px] items-center justify-center ${i === 0 ? 'bg-[#fbd38a]' : ''}`}>
              <svg width="12" height="12" viewBox="0 0 12 12" fill={i < 3 ? '#fff' : 'none'} stroke="#5d5d5d">
                {i === 1 ? <path d="M.5 1.500L5.500 3v8L.5 9.500zM11.500 1.500L6 3v8l5.500-1.500z" /> : i < 3 ? <path d="M1.500.5h9v11h-9z" /> : null}
                <path d={i === 1 ? 'M2 5l2 .5M8 5.500l2-.5' : i === 3 ? 'M1 2.500h8M4 4.500h8M4 6.500h6M6 8.500h6M4 10.500h6' : i === 4 ? 'M0 2.500h12M0 4.500h12M0 6.500h12M0 8.500h12M0 10.500h12' : 'M3 3.500h6M3 5.500h6M3 7.500h6M3 9.500h4'} />
                {i === 2 && <circle cx="9" cy="9" r="2.500" fill="#2f8f7a" stroke="#1f5f8a" />}
              </svg>
            </button>
          ))}
        </div>
        <button className="ml-[8px] w-[33px]">180%</button>
        <button aria-label="缩小" onClick={() => setZoom(zoom - 5)} className="ml-[9px] flex h-[14px] w-[14px] items-center justify-center rounded-full border border-[#4a689c] bg-[#dbe8f8]"><i className="h-[2px] w-[8px] bg-[#3f5a8c]" /></button>
        <input type="range" aria-label="显示比例" value={zoom} onChange={(e) => setZoom(+e.target.value)} className="h-[14px] w-[104px] appearance-none bg-[linear-gradient(#e8f1fd,#e8f1fd)] bg-[length:100%_1px] bg-center bg-no-repeat [&::-webkit-slider-thumb]:h-[12px] [&::-webkit-slider-thumb]:w-[9px] [&::-webkit-slider-thumb]:appearance-none [&::-webkit-slider-thumb]:rounded-b-[4px] [&::-webkit-slider-thumb]:border [&::-webkit-slider-thumb]:border-[#4a689c] [&::-webkit-slider-thumb]:bg-[#dbe8f8]" />
        <button aria-label="放大" onClick={() => setZoom(zoom + 5)} className="flex h-[14px] w-[14px] items-center justify-center rounded-full border border-[#4a689c] bg-[#dbe8f8]"><svg width="8" height="8" viewBox="0 0 8 8" stroke="#3f5a8c" strokeWidth="2"><path d="M0 4h8M4 0v8" /></svg></button>
      </div>
    </footer>
  )
}

const apps = [
  { name: '贝壳', icon: <><path d="M2 16Q1 9 5 7q1-4 5-3 2-4 6-3 4-1 6 3 4-1 5 3 4 2 3 9-1 6-6 9l-4 6h-8l-4-6q-5-3-6-9z" fill="#fbb23a" stroke="#c87713" /><path d="M14 29L4 13M15 28L9 7M16 28V4M17 28l5-21M18 29l9-15" stroke="#ffe6a8" strokeWidth="1.500" /><path d="M21 12l2 6h6l-5 4 2 6-5-3-5 3 2-6-5-4h6z" fill="#f58a2c" stroke="#b5541a" /></> },
  { name: '记事本', icon: <><rect x="4" y="1" width="25" height="30" rx="3" fill="#f4fbfe" stroke="#b8d9e5" /><path d="M7 6h19M7 10h19M7 14h19M7 18h19M7 22h19M7 26h19" stroke="#2a91b5" strokeWidth="2" /></> },
  { name: '钉钉', icon: <><circle cx="16" cy="16" r="16" fill="#2f97e8" /><path d="M8 6q5 5 16 7l-2 6h3L15 27l2-7q-6-2-7-5 2 1 4 1-5-4-6-10z" fill="#fff" /></> },
  { name: '软盘', icon: <><path d="M1 1h28l2 2v28H1z" fill="#1d2fd0" stroke="#101a80" /><path d="M9 1h13v10H9z" fill="#d5dbe8" /><path d="M16 2h4v8h-4z" fill="#1d2fd0" /><path d="M5 15h22v15H5z" fill="#fff" /><path d="M7 18h18M7 21h18M7 24h9" stroke="#d02020" strokeWidth="1.200" /><text x="16" y="29" fontSize="8" fontFamily="Liberation Sans">64</text></> },
  { name: 'Genesis', icon: <path d="M29 1l-1 6-11 2-5 6v10h7v-5h-4v-4h13v11l-5 4H8l-5-4V14L11 5z" fill="#dd2a1e" stroke="#8f1610" /> },
  { name: 'PCB', icon: <><path d="M4 31V2h20" fill="none" stroke="#0e9a3e" strokeWidth="1.500" /><path d="M8 6h18l4 4v9l-4 4H17v3l-2 1v4H8V13h9v6h6v-7H8z" fill="#159a44" /></> },
  { name: '卷尺', icon: <><ellipse cx="18" cy="19" rx="13" ry="10" fill="#168f9c" stroke="#0b3f55" strokeWidth="2" /><path d="M1 5l11-3 3 5-8 4z" fill="#22b8b8" stroke="#0b5252" /><path d="M8 10l6 5" stroke="#0b3f55" strokeWidth="3" /><circle cx="19" cy="17" r="7" fill="#1470c0" stroke="#e8e04a" strokeWidth="1.500" /><circle cx="19" cy="17" r="3" fill="#3fd0a0" /></> },
  { name: 'X', tint: 'from-[#d9a9d6] to-[#8a2c85]', stack: 'border-r-[5px] border-double', icon: <><path d="M3 3h5l20 27h-6z" fill="#5c1068" stroke="#e9cdee" /><path d="M27 3h3L7 30H2z" fill="#3f0a4a" stroke="#e9cdee" /></> },
  { name: 'Word', tint: 'from-[#d8dadc] to-[#a9abad]', stack: 'border-r-[5px] border-double', icon: <><path d="M3 29V8q1-6 7-7h14v8" fill="#dbe7f8" stroke="#2b5db5" strokeWidth="2" /><path d="M9 8l20-3 1 24-19 2z" fill="#fff" stroke="#7f9cc8" /><text x="9" y="22" fontSize="14" fontWeight="bold" fontFamily="Liberation Serif" fill="#2b4f9e">W</text><path d="M23 12h5M23 15h5M23 18h5M13 26h14" stroke="#2b5db5" strokeWidth="1.500" /></> },
  { name: 'Excel', stack: 'border-r-[5px] border-double', icon: <><path d="M3 29V8q1-6 7-7h14v8" fill="#e6f5de" stroke="#3f9a2e" strokeWidth="2" /><path d="M9 8l20-3 1 24-19 2z" fill="#f6fbf3" stroke="#7fb870" /><path d="M20 13h4v4h-4zM25 13h4v4h-4zM20 19h4v4h-4zM25 19h4v4h-4zM13 25h4v4h-4zM19 25h4v4h-4zM25 25h4v4h-4z" fill="#6fbf4f" /><text x="6" y="21" fontSize="17" fontWeight="bold" fontFamily="Liberation Sans" fill="#1f5f1a">X</text></> },
]

function Taskbar(){
  return (
    <footer className="flex h-[39px] shrink-0 items-center bg-[linear-gradient(to_right,#6a6a68_0%,#5f605f_35%,#7b7d7e_42%,#55585a_47%,#1e2122_51%,#30312f_57%,#232527_66%,#3a3b38_78%,#2b2c2a_100%)] shadow-[inset_0_1px_0_#222,inset_0_2px_0_#8a8a8a]">
      <button aria-label="开始" className="ml-[8px]">
        <svg width="37" height="37" viewBox="0 0 37 37">
          <defs><radialGradient id="start" cx=".5" cy=".85" r=".8"><stop offset="0" stopColor="#4fe0f5" /><stop offset=".5" stopColor="#1d6fa8" /><stop offset="1" stopColor="#1a3b5c" /></radialGradient></defs>
          <circle cx="18.500" cy="18.500" r="17.500" fill="url(#start)" stroke="#9fb9c9" />
          <path d="M10 10q4-3 8-1l-2 8q-4-2-8 0z" fill="#f0622a" /><path d="M20 10q4 2 9 0l-2 8q-5 2-9 0z" fill="#8cc63f" /><path d="M8 19q4-2 8 0l-2 8q-4-2-8 0z" fill="#3fa3e8" /><path d="M18 20q4 2 8 0l-2 8q-4 2-8 0z" fill="#fccf2f" />
        </svg>
      </button>
      <div className="ml-[14px] flex gap-[3px]">
        {apps.map((a) => (
          <button key={a.name} aria-label={a.name} className={`flex h-[37px] w-[59px] items-center justify-center rounded-[3px] border border-[#2d2d2d] bg-linear-to-br shadow-[inset_0_0_0_1px_rgba(255,255,255,.45)] ${a.stack || ''} ${a.tint || 'from-[#a9aaa8] to-[#767775]'}`}>
            <svg width="32" height="32" viewBox="0 0 32 32">{a.icon}</svg>
          </button>
        ))}
      </div>
      <div className="ml-auto flex h-full items-center text-white">
        <div className="flex items-center gap-[4px] pb-[4px] text-[15px]">
          <svg width="16" height="16" viewBox="0 0 16 16" fontFamily="Liberation Sans" fontSize="8" fontWeight="bold"><path d="M0 0h16v16H0z" fill="#ddd" /><path d="M1 1h14v14H1z" fill="#222" /><text x="2" y="8" fill="#fff">MS</text><text x="2" y="15" fill="#f0c020">BY</text></svg>
          <span className="flex w-[16px] flex-col text-[9px] leading-[8px]"><span>体</span><span className="self-end">验</span></span>
          <span className="w-[16px] text-center leading-[16px]">中</span>
          <span className="w-[16px] text-center text-[13px]">·,</span>
          <svg className="ml-[2px]" width="15" height="16" viewBox="0 0 15 16"><path d="M1 7h10v8H3z" fill="#f0c832" stroke="#7a5a10" /><path d="M2 6h6M5 2l4 6M3 11h8" stroke="#d03020" strokeWidth="1.500" /><circle cx="11" cy="4" r="3" fill="#eee" stroke="#888" /></svg>
          <svg width="17" height="16" viewBox="0 0 17 16"><path d="M0 1h12v12H2z" fill="#fff" stroke="#2b45b0" /><path d="M2 4h8M2 7h8M2 10h8" stroke="#2b45b0" strokeWidth="1.500" /><path d="M10 4v10l2.500-2 1.500 3 1.500-1-1.500-3h3z" fill="#fff" stroke="#111" /></svg>
          <span className="ml-[3px] flex h-[15px] w-[15px] items-center justify-center rounded-full border border-white bg-[#2038c8] text-[12px] font-bold">?</span>
          <svg className="ml-[6px]" width="8" height="16" viewBox="0 0 8 16" fill="none" stroke="#fff"><path d="M2.500.5h5v3h-5zM.5 2.500h5v3h-5z" /><path d="M1 12h6l-3 3z" fill="#fff" stroke="none" /></svg>
        </div>
        <svg className="ml-[11px]" width="8" height="4" viewBox="0 0 8 4" fill="#fff"><path d="M0 4l4-4 4 4z" /></svg>
        <svg className="ml-[14px]" width="16" height="14" viewBox="0 0 16 14" fill="#fff"><path d="M0 4h3l4-4v14L3 10H0z" /><path d="M9 4q2 3 0 6M11 2q4 5 0 10M13.500.5q4 6.500 0 13" fill="none" stroke="#fff" /></svg>
        <svg className="ml-[8px]" width="17" height="16" viewBox="0 0 17 16"><path d="M2 0v16" stroke="#fff" strokeWidth="1.500" /><path d="M3 1h10v7H3z" fill="#fff" /><circle cx="11.500" cy="10.500" r="5" fill="#d8281c" /><path d="M9.500 8.500l4 4M13.500 8.500l-4 4" stroke="#fff" strokeWidth="1.500" /></svg>
        <svg className="ml-[8px]" width="16" height="15" viewBox="0 0 16 15" fill="none" stroke="#fff"><path d="M5.500 3.500h10v7h-10zM8 13.500h7M11 11v3M1 1v3h4V1M3 4v9h3" strokeWidth="1.300" /></svg>
        <div className="ml-[14px] flex w-[62px] flex-col items-center text-[12px] leading-[18px] whitespace-nowrap"><span>14:27</span><span>2021/3/27</span></div>
        <button aria-label="显示桌面" className="ml-[7px] h-[37px] w-[14px] border border-[#777] bg-linear-to-b from-[#777] to-[#222]" />
      </div>
    </footer>
  )
}

export default function App(){
  return (
    <div className="relative flex h-screen flex-col overflow-hidden bg-[#bfdbff] font-['Open_Sans','Noto_Sans_CJK_SC',sans-serif]">
      <TitleBar />
      <TabRow />
      <OfficeOrb />
      <div className="mx-[2px] flex h-[106px] shrink-0 gap-[3px] rounded-[4px] border border-[#8db2e3] border-b-[#e6fbff] bg-linear-to-b from-[#dfe9f5] via-[#d3e1f1] to-[#d9e9f4] pt-[3px] pr-[70px] pb-px pl-[2px]">
        <Clipboard />
        <FontGroup />
        <ParagraphGroup />
        <StyleGroup />
        <EditGroup />
      </div>
      <RulerH />
      <div className="flex min-h-0 flex-1">
        <RulerV />
        <Canvas />
        <Scroll />
      </div>
      <StatusBar />
      <Taskbar />
    </div>
  )
}
